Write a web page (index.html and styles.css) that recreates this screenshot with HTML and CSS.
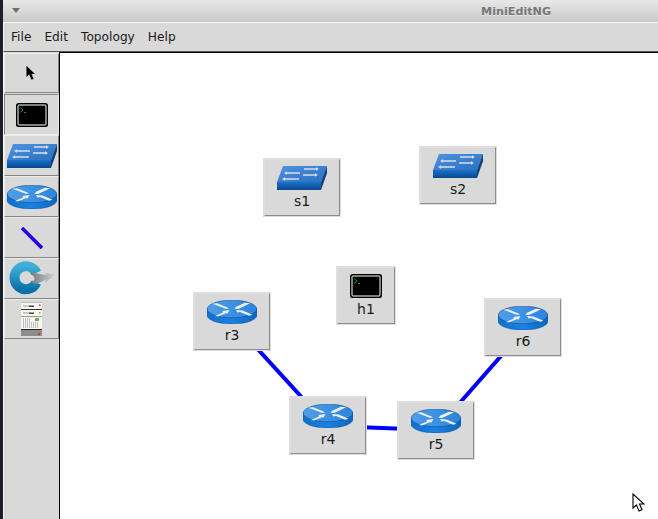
FILE: index.html
```html
<!DOCTYPE html>
<html lang="en">
<head>
<meta charset="utf-8">
<title>MiniEditNG</title>
<link rel="stylesheet" href="styles.css">
</head>
<body>
<svg class="defs" width="0" height="0" aria-hidden="true">
  <defs>
    <linearGradient id="swTop" x1="0" y1="0" x2="1" y2="1">
      <stop offset="0" stop-color="#4f94e0"/><stop offset="1" stop-color="#2a6ec0"/>
    </linearGradient>
    <linearGradient id="swFront" x1="0" y1="0" x2="0" y2="1">
      <stop offset="0" stop-color="#1a72cc"/><stop offset="1" stop-color="#07468c"/>
    </linearGradient>
    <linearGradient id="rtTop" x1="0" y1="0" x2="1" y2="0">
      <stop offset="0" stop-color="#4f9eea"/><stop offset="1" stop-color="#2c84dc"/>
    </linearGradient>
    <linearGradient id="rtSide" x1="0" y1="0" x2="1" y2="0">
      <stop offset="0" stop-color="#0f6fcc"/><stop offset=".5" stop-color="#1a82e4"/><stop offset="1" stop-color="#0c66bc"/>
    </linearGradient>
    <linearGradient id="ring" x1="0" y1="0" x2="0" y2="1">
      <stop offset="0" stop-color="#3fb0d8"/><stop offset="1" stop-color="#0a72a8"/>
    </linearGradient>
    <linearGradient id="key" x1="0" y1="0" x2="1" y2="0">
      <stop offset="0" stop-color="#6f787e"/><stop offset="1" stop-color="#cfd3d4"/>
    </linearGradient>
    <symbol id="i-switch" viewBox="0 0 50 24">
      <polygon points="6,0 50,0 44,16 0,16" fill="url(#swTop)"/>
      <polygon points="0,16 44,16 44,24 0,24" fill="url(#swFront)"/>
      <polygon points="44,16 50,0 50,7 44,24" fill="#0a3f78"/>
      <g fill="#d7e0e8">
        <polygon points="7,7 10,5.200 10,6.300 23,6.300 23,7.700 10,7.700 10,8.800"/>
        <polygon points="42,3 39,1.200 39,2.300 27,2.300 27,3.700 39,3.700 39,4.800"/>
        <polygon points="5,13 8,11.200 8,12.300 22,12.300 22,13.700 8,13.700 8,14.800"/>
        <polygon points="41,9 38,7.200 38,8.300 26,8.300 26,9.700 38,9.700 38,10.800"/>
      </g>
    </symbol>
    <symbol id="i-router" viewBox="0 0 50 24">
      <path d="M0 9v6c0 5 11 9 25 9s25-4 25-9V9z" fill="url(#rtSide)" stroke="#0a4d96" stroke-width=".5"/>
      <ellipse cx="25" cy="9" rx="24.800" ry="8.800" fill="url(#rtTop)" stroke="#0a3f7c" stroke-width=".5"/>
      <g fill="#edf1f4">
        <polygon points="5,3.800 10,3.200 20.500,7.400 22,8.600 18.500,8.800 9,5"/>
        <polygon points="43,3.200 38,2.800 29,6.800 27.500,9 31,9 40,4.800"/>
        <polygon points="8,16 16,12.400 15.500,11 22.500,10 20.500,13.400 18.500,13.200 11,16.600"/>
        <polygon points="29,10 35.500,10.400 45.500,14.800 42,15.800 33,12 30.500,12.600"/>
      </g>
    </symbol>
    <symbol id="i-host" viewBox="0 0 32 24">
      <rect x="0" y="0" width="32" height="24" rx="2.500" fill="#000"/>
      <rect x="2" y="2" width="28" height="20" rx="1" fill="#000" stroke="#fff" stroke-width="1"/>
      <path d="M4 4.500l3 2.500-3 2.500" fill="none" stroke="#19c419" stroke-width=".8"/>
      <path d="M8 9.500h2" stroke="#19c419" stroke-width=".8"/>
    </symbol>
  </defs>
</svg>

<div class="window">
  <header class="titlebar">
    <span class="menu-arrow"></span>
    <span class="title">MiniEditNG</span>
  </header>
  <nav class="menubar">
    <span class="menu-item">File</span>
    <span class="menu-item">Edit</span>
    <span class="menu-item">Topology</span>
    <span class="menu-item">Help</span>
  </nav>
  <div class="workspace">
    <aside class="toolbar">
      <div class="tool tool-select">
        <svg class="cursor-icon" viewBox="0 0 10 17"><path d="M0.500 0.500V13l3-3 2.500 6 2.500-1-2.500-5.500H10z" fill="#000"/></svg>
      </div>
      <div class="tool tool-host pressed">
        <svg class="icon-host"><use href="#i-host"/></svg>
      </div>
      <div class="tool tool-switch">
        <svg class="icon-wide"><use href="#i-switch"/></svg>
      </div>
      <div class="tool tool-router">
        <svg class="icon-wide"><use href="#i-router"/></svg>
      </div>
      <div class="tool tool-link">
        <svg class="icon-link" viewBox="0 0 22 22"><line x1="1" y1="1" x2="21" y2="21" stroke="#2200e6" stroke-width="3.600"/></svg>
      </div>
      <div class="tool tool-netflow">
        <svg class="icon-netflow" viewBox="0 0 46 36">
          <path d="M27.400 11.800A11.500 11.500 0 1 0 27.400 21.600" fill="none" stroke="url(#ring)" stroke-width="10"/>
          <path d="M21 12.500c3-1.500 6-.5 9 .5l8 1-2-2 10 1.500-10 8.500 1-3.500-7 3.500c-3 1.500-7 .5-8.500-2 2.500.5 4 0 4-2.500 0-2-2.500-3.500-4.500-5z" fill="url(#key)"/>
        </svg>
      </div>
      <div class="tool tool-server">
        <svg class="icon-server" viewBox="0 0 21 34">
          <rect width="21" height="34" fill="#f6f6f3"/>
          <rect y="0" width="21" height="1" fill="#bbb"/>
          <rect x="2" y="3.500" width="6" height="1" fill="#999"/>
          <rect x="8" y="3.500" width="5" height="1.500" fill="#444"/>
          <rect x="18" y="2.500" width="1.500" height="1.500" fill="#d33"/>
          <rect y="7" width="21" height="1" fill="#333"/>
          <rect x="2" y="10.500" width="6" height="1" fill="#999"/>
          <rect x="8" y="10.500" width="5" height="1.500" fill="#444"/>
          <rect x="18" y="10" width="1.500" height="1.500" fill="#7b4"/>
          <rect y="14" width="21" height="1" fill="#999"/>
          <rect x="14" y="16" width="4" height="3" fill="#6bb04a"/>
          <path d="M2 17h8M2 19h8M2 21h15M2 23h15M2 25h15" stroke="#888" stroke-width="1" stroke-dasharray="1 1"/>
          <rect y="27" width="21" height="1.500" fill="#222"/>
          <rect y="28.500" width="21" height="5.500" fill="#8d8d8d"/>
          <rect x="17" y="31" width="2" height="2" fill="#d33"/>
        </svg>
      </div>
    </aside>
    <main class="canvas">
      <svg class="links" viewBox="0 0 598 466">
        <line x1="172" y1="268" x2="268" y2="373"/>
        <line x1="268" y1="373" x2="376" y2="377"/>
        <line x1="376" y1="377" x2="463" y2="278"/>
      </svg>
      <div class="node node-s1"><svg class="icon-wide"><use href="#i-switch"/></svg><span class="label">s1</span></div>
      <div class="node node-s2"><svg class="icon-wide"><use href="#i-switch"/></svg><span class="label">s2</span></div>
      <div class="node node-h1"><svg class="icon-host"><use href="#i-host"/></svg><span class="label">h1</span></div>
      <div class="node node-r3"><svg class="icon-wide"><use href="#i-router"/></svg><span class="label">r3</span></div>
      <div class="node node-r4"><svg class="icon-wide"><use href="#i-router"/></svg><span class="label">r4</span></div>
      <div class="node node-r5"><svg class="icon-wide"><use href="#i-router"/></svg><span class="label">r5</span></div>
      <div class="node node-r6"><svg class="icon-wide"><use href="#i-router"/></svg><span class="label">r6</span></div>
      <svg class="mouse" viewBox="0 0 13 20"><path d="M1 1v14l3.500-3 2.500 6 3-1.300-2.500-5.700h4.500z" fill="#fff" stroke="#000" stroke-width="1.100"/></svg>
    </main>
  </div>
</div>
</body>
</html>
```
FILE: styles.css
```css
* { box-sizing: border-box; }
html, body { margin: 0; height: 100%; overflow: hidden; }
body {
  background: #1c1f26;
  font-family: "DejaVu Sans", sans-serif;
  color: #1a1a1a;
}
.defs { position: absolute; }
.window {
  margin-left: 3px;
  height: 519px;
  display: flex;
  flex-direction: column;
  background: #d9d9d9;
}
.titlebar {
  height: 23px;
  flex: none;
  display: flex;
  align-items: center;
  padding-left: 9px;
  background: linear-gradient(#e8e8e8, #c9c9c9);
  border-bottom: 1px solid #f6f6f6;
}
.menu-arrow {
  width: 0;
  height: 0;
  border-left: 4px solid transparent;
  border-right: 4px solid transparent;
  border-top: 5px solid #6e6e6e;
  margin-top: -1px;
}
.title {
  margin-left: 461px;
  margin-top: 1px;
  font-weight: 700;
  font-size: 11.2px;
  color: #777;
  text-shadow: 0 1px 0 #e4e4e4;
}
.menubar {
  height: 29px;
  flex: none;
  display: flex;
  align-items: center;
  gap: 13px;
  padding-left: 7px;
  font-size: 12.2px;
  border-left: 1px solid #f6f6f6;
  border-bottom: 1px solid #555;
}
.workspace {
  flex: 1;
  min-height: 0;
  display: flex;
  border-left: 1px solid #f6f6f6;
}
.toolbar {
  width: 55px;
  flex: none;
  padding-top: 1px;
  display: flex;
  flex-direction: column;
}
.tool {
  height: 41px;
  display: flex;
  align-items: center;
  justify-content: center;
  background: #d9d9d9;
  border: 1px solid;
  border-color: #ececec #858585 #858585 #ececec;
}
.tool-select { height: 40px; margin-bottom: 1px; }
.tool-server { height: 40px; }
.tool.pressed { border-color: #858585 #ececec #ececec #858585; }
.cursor-icon { width: 9px; height: 16px; margin-right: 2px; margin-bottom: 1px; }
.icon-wide { width: 50px; height: 24px; display: block; flex: none; }
.icon-host { width: 32px; height: 24px; display: block; flex: none; }
.icon-link { width: 22px; height: 22px; }
.icon-netflow { width: 46px; height: 36px; }
.icon-server { width: 21px; height: 34px; }
.canvas {
  flex: 1;
  position: relative;
  overflow: hidden;
  background: #fff;
  border-left: 1px solid #000;
  border-top: 1px solid #000;
}
.links { position: absolute; left: 0; top: 0; width: 598px; height: 466px; }
.links line { stroke: #0000ff; stroke-width: 4; }
.node {
  position: absolute;
  width: 78px;
  height: 59px;
  padding-top: 6px;
  display: flex;
  flex-direction: column;
  align-items: center;
  background: #d9d9d9;
  border: 2px solid;
  border-color: #dedede #8c8c8c #8c8c8c #dedede;
  outline: 1px solid #dedede;
  outline-offset: -1px;
}
.node-h1 { width: 60px; }
.label { font-size: 14px; line-height: 17px; margin-top: 3px; }
.node-s1 { left: 203px; top: 105px; }
.node-s2 { left: 359px; top: 93px; }
.node-h1 { left: 276px; top: 213px; }
.node-r3 { left: 133px; top: 239px; }
.node-r4 { left: 229px; top: 343px; }
.node-r5 { left: 337px; top: 348px; }
.node-r6 { left: 424px; top: 245px; }
.mouse { position: absolute; left: 572px; top: 440px; width: 13px; height: 20px; }
```
